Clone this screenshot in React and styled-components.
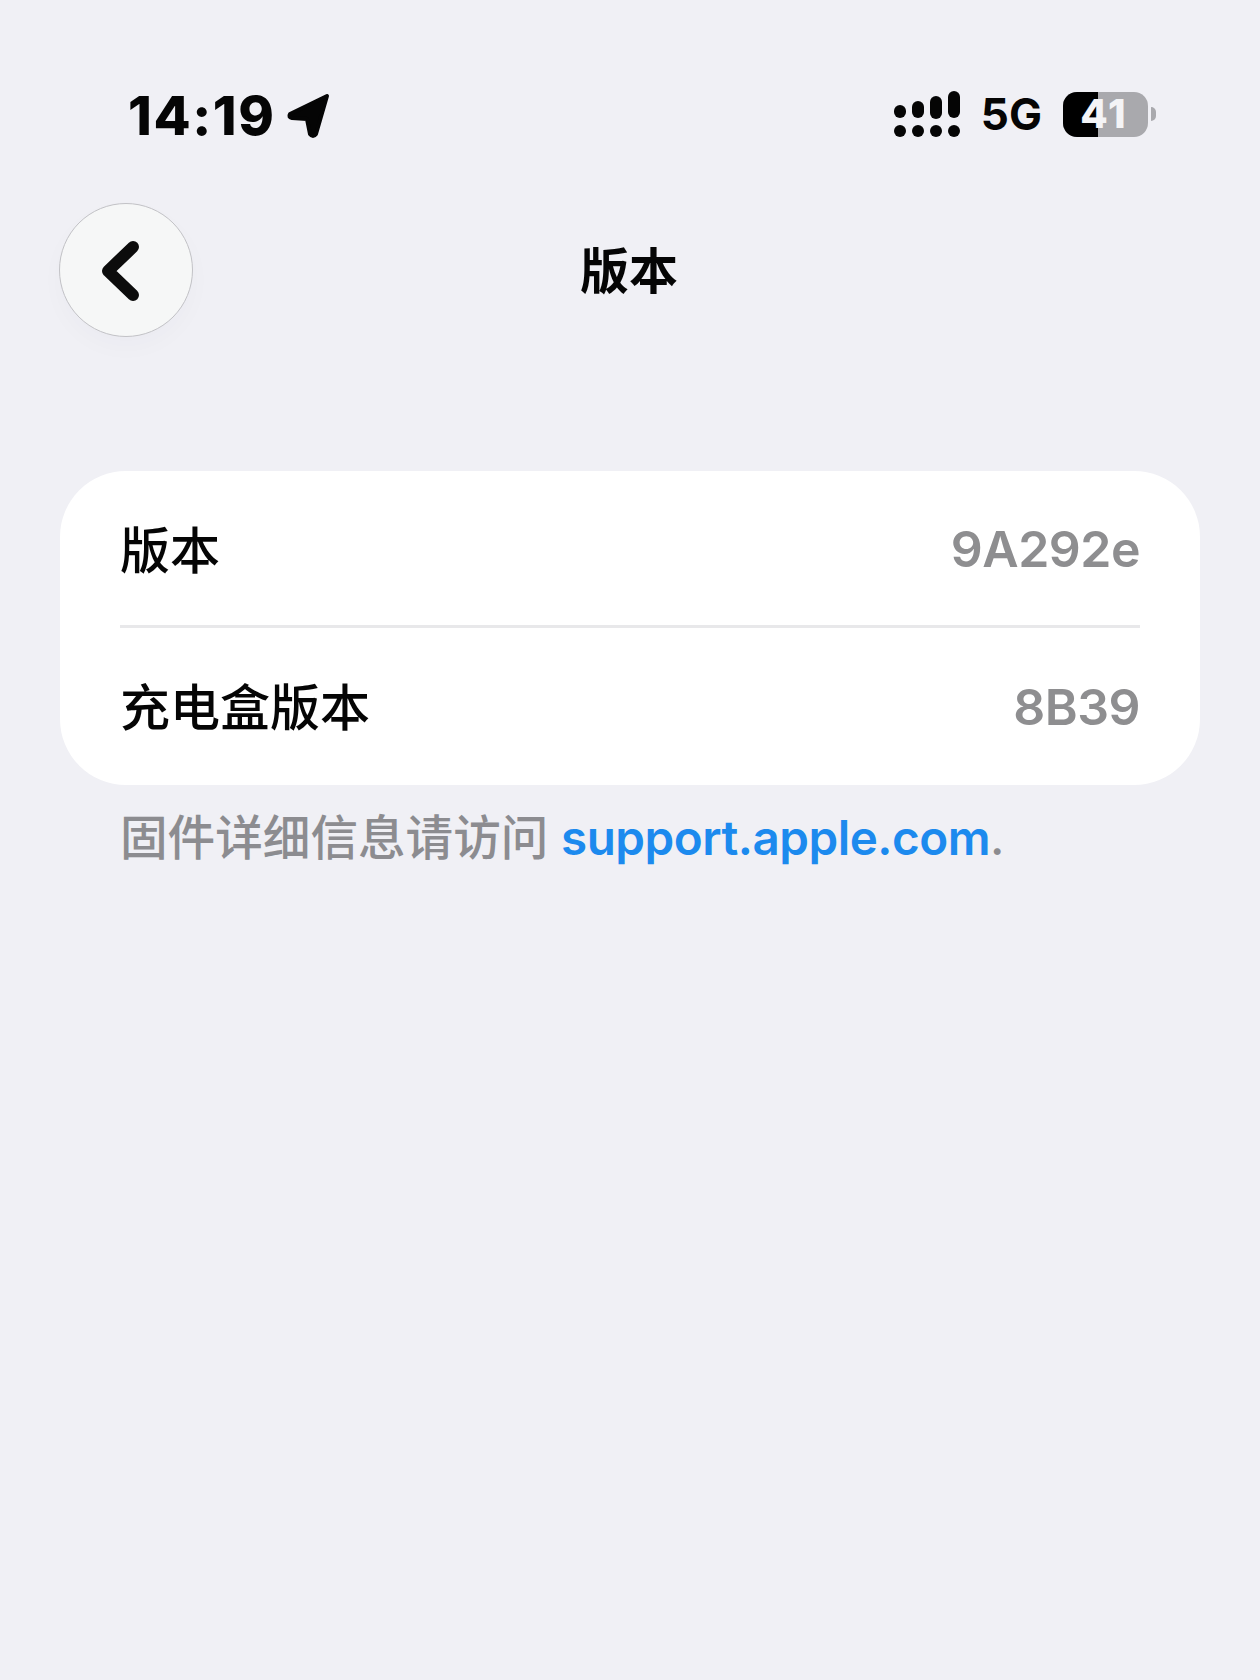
import React from "react";
import styled, { createGlobalStyle } from "styled-components";

const GlobalStyle = createGlobalStyle`
  html, body {
    margin: 0;
    padding: 0;
    background: #f0f0f5;
  }
  body {
    font-family: "Liberation Sans", "Noto Sans CJK SC", sans-serif;
  }
`;

const rows = [
  { label: "版本", value: "9A292e", height: 154 },
  { label: "充电盒版本", value: "8B39", height: 155 },
];

export default function App() {
  return (
    <Page>
      <GlobalStyle />
      <StatusBar>
        <TimeGroup>
          <Time>14:19</Time>
          <svg width="46" height="46" viewBox="0 0 46 46">
            <path
              d="M41 4 L4 22 Q2 25 6 26 L21 27 L24 42 Q27 46 30 42 Z"
              fill="#050505"
              stroke="#050505"
              strokeWidth="4"
              strokeLinejoin="round"
            />
          </svg>
        </TimeGroup>
        <StatusIcons>
          <svg width="66" height="48" viewBox="0 0 66 48">
            <g fill="#050505">
              <rect x="0" y="15" width="12" height="13" rx="6" />
              <rect x="18" y="11" width="12" height="17" rx="6" />
              <rect x="36" y="6" width="12" height="23" rx="6" />
              <rect x="54" y="1" width="12" height="27" rx="6" />
              <circle cx="6" cy="41" r="6" />
              <circle cx="24" cy="41" r="6" />
              <circle cx="42" cy="41" r="6" />
              <circle cx="60" cy="41" r="6" />
            </g>
          </svg>
          <Network>5G</Network>
          <Battery>
            <BatteryBody>
              <BatteryFill />
              <BatteryLevel>41</BatteryLevel>
            </BatteryBody>
            <BatteryNub />
          </Battery>
        </StatusIcons>
      </StatusBar>
      <NavBar>
        <BackButton>
          <svg width="44" height="62" viewBox="0 0 44 62">
            <path
              d="M34 7 L9 31 L34 55"
              fill="none"
              stroke="#0c0c0c"
              strokeWidth="12"
              strokeLinecap="round"
              strokeLinejoin="round"
            />
          </svg>
        </BackButton>
        <Title>版本</Title>
      </NavBar>
      <Card>
        {rows.map((row, i) => (
          <Row key={row.label} $height={row.height} $divider={i < rows.length - 1}>
            <Label>{row.label}</Label>
            <Value>{row.value}</Value>
          </Row>
        ))}
      </Card>
      <Footnote>
        固件详细信息请访问 <FootLink>support.apple.com</FootLink>.
      </Footnote>
    </Page>
  );
}

const Page = styled.div`
  width: 1260px;
  height: 1680px;
  overflow: hidden;
  background: #f0f0f5;
  display: flex;
  flex-direction: column;
`;

const StatusBar = styled.div`
  height: 203px;
  box-sizing: border-box;
  padding: 90px 104px 0 128px;
  display: flex;
  justify-content: space-between;
  align-items: flex-start;
`;

const TimeGroup = styled.div`
  display: flex;
  align-items: center;
  gap: 10px;
  height: 50px;
`;

const Time = styled.span`
  font-family: "Inter", sans-serif;
  font-size: 54px;
  font-weight: 800;
  letter-spacing: 1.6px;
  color: #050505;
`;

const StatusIcons = styled.div`
  display: flex;
  align-items: center;
  gap: 21px;
  height: 48px;
`;

const Network = styled.span`
  font-family: "Inter", sans-serif;
  font-size: 44px;
  font-weight: 700;
  letter-spacing: 0;
  color: #050505;
`;

const Battery = styled.div`
  display: flex;
  align-items: center;
  gap: 3px;
`;

const BatteryBody = styled.div`
  position: relative;
  width: 85px;
  height: 45px;
  border-radius: 14px;
  background: #a9a9ad;
`;

const BatteryFill = styled.div`
  width: 35px;
  height: 100%;
  border-radius: 14px 0 0 14px;
  background: #000;
`;

const BatteryLevel = styled.span`
  position: absolute;
  inset: 0;
  display: flex;
  align-items: center;
  justify-content: center;
  font-family: "Inter", sans-serif;
  font-size: 40px;
  font-weight: 800;
  line-height: 1;
  letter-spacing: 2px;
  padding-right: 3px;
  color: #f4f4f6;
`;

const BatteryNub = styled.div`
  width: 5px;
  height: 14px;
  border-radius: 0 5px 5px 0;
  background: #a9a9ad;
`;

const NavBar = styled.div`
  position: relative;
  height: 134px;
  padding-left: 59px;
  display: flex;
  align-items: center;
`;

const BackButton = styled.button`
  width: 134px;
  height: 134px;
  box-sizing: border-box;
  padding: 2px 10px 0 0;
  border-radius: 50%;
  border: 1.5px solid #c2c2c6;
  background: #f6f7f7;
  box-shadow: 0 10px 24px rgba(60, 60, 80, 0.025);
  display: flex;
  align-items: center;
  justify-content: center;
`;

const Title = styled.h1`
  position: absolute;
  left: 580px;
  top: calc(50% - 3px);
  transform: translateY(-50%);
  margin: 0;
  font-family: "Noto Sans CJK SC", sans-serif;
  font-size: 49px;
  font-weight: 700;
  line-height: 1;
  color: #050505;
`;

const Card = styled.div`
  margin: 134px 60px 0;
  padding: 0 60px 2px;
  background: #fff;
  border-radius: 66px;
`;

const Row = styled.div`
  height: ${(p) => p.$height}px;
  box-sizing: content-box;
  display: flex;
  align-items: center;
  justify-content: space-between;
  border-bottom: ${(p) => (p.$divider ? "3px solid #e8e8ea" : "none")};
`;

const Label = styled.span`
  font-family: "Noto Sans CJK SC", sans-serif;
  font-size: 50px;
  font-weight: 500;
  padding-bottom: 3px;
  color: #050505;
`;

const Value = styled.span`
  font-family: "Inter", sans-serif;
  font-size: 50px;
  font-weight: 600;
  letter-spacing: -0.5px;
  padding-top: 2px;
  color: #8e8e90;
`;

const Footnote = styled.p`
  margin: 24px 0 0 120px;
  font-family: "Inter", "Noto Sans CJK SC", sans-serif;
  font-size: 47.6px;
  font-weight: 500;
  line-height: 58px;
  color: #8c8c90;
  white-space: nowrap;
`;

const FootLink = styled.span`
  font-weight: 600;
  letter-spacing: -0.5px;
  color: #1c8aee;
`;
